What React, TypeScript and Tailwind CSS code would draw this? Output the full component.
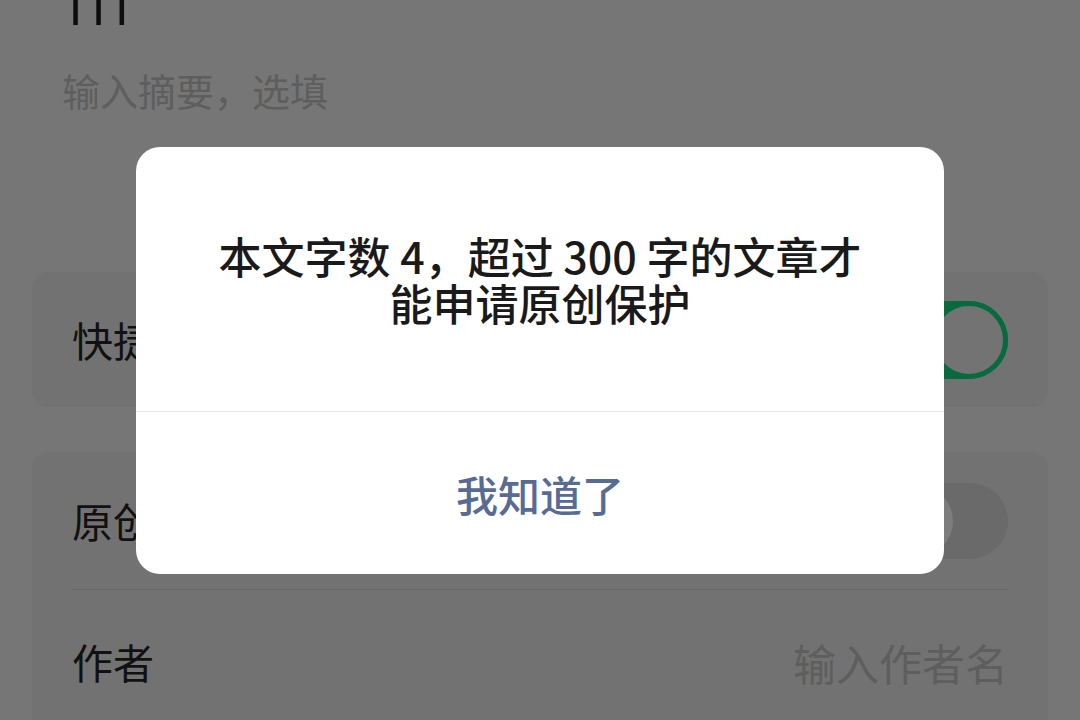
const CJK = "font-['Noto_Sans_CJK_SC','Noto_Sans',sans-serif]"

function ToggleOn() {
  return (
    <div className="flex h-[78px] w-[130px] shrink-0 items-center justify-end rounded-full bg-[#086b3f]">
      <div className="h-[78px] w-[78px] rounded-full border-[5px] border-[#086b3f] bg-[#737373]" />
    </div>
  )
}

function ToggleOff() {
  return (
    <div className="flex h-[76px] w-[128px] shrink-0 items-center rounded-full bg-[#6a6a6a] pl-[3px]">
      <div className="h-[70px] w-[70px] rounded-full bg-[#7d7d7d]" />
    </div>
  )
}

export default function App() {
  return (
    <div className={`relative h-[720px] w-[1080px] overflow-hidden bg-[#767676] ${CJK}`}>
      {/* Page behind the mask */}
      <div className="flex flex-col">
        <div className="mt-[-17px] h-[50px] px-[60px] font-['Roboto',sans-serif] text-[50px] leading-[50px] tracking-[-5px] text-[#0d0d0d]">
          111
        </div>
        <div className="mt-[38px] px-[62px] text-[38px] leading-[38px] text-[#5e5e5e]">
          输入摘要，选填
        </div>

        <div className="mx-[32px] mt-[163px] flex h-[135px] items-center justify-between rounded-[16px] bg-[#727272] px-[40px]">
          <span className="text-[41px] text-[#111]">快捷转载</span>
          <ToggleOn />
        </div>

        <div className="mx-[32px] mt-[45px] flex flex-col rounded-[16px] bg-[#727272] px-[40px]">
          <div className="flex h-[137px] items-center justify-between">
            <span className="text-[41px] text-[#111]">原创</span>
            <ToggleOff />
          </div>
          <div className="h-px bg-[#686868]" />
          <div className="flex h-[144px] items-center justify-between">
            <span className="text-[41px] text-[#111]">作者</span>
            <span className="text-[43px] text-[#5e5e5e]">输入作者名</span>
          </div>
        </div>
      </div>

      {/* Dialog */}
      <div className="absolute left-[136px] top-[147px] flex h-[427px] w-[808px] flex-col overflow-hidden rounded-[24px] bg-white">
        <div className="flex h-[264px] items-center justify-center px-[20px] text-center text-[43px] font-medium leading-[47px] text-[#1a1a1a]">
          <p>
            本文字数 4，超过 300 字的文章才
            <br />
            能申请原创保护
          </p>
        </div>
        <div className="h-px bg-[#e6e6e6]" />
        <div className="flex flex-1 items-center justify-center text-[42px] font-medium text-[#576b95]">
          我知道了
        </div>
      </div>
    </div>
  )
}
